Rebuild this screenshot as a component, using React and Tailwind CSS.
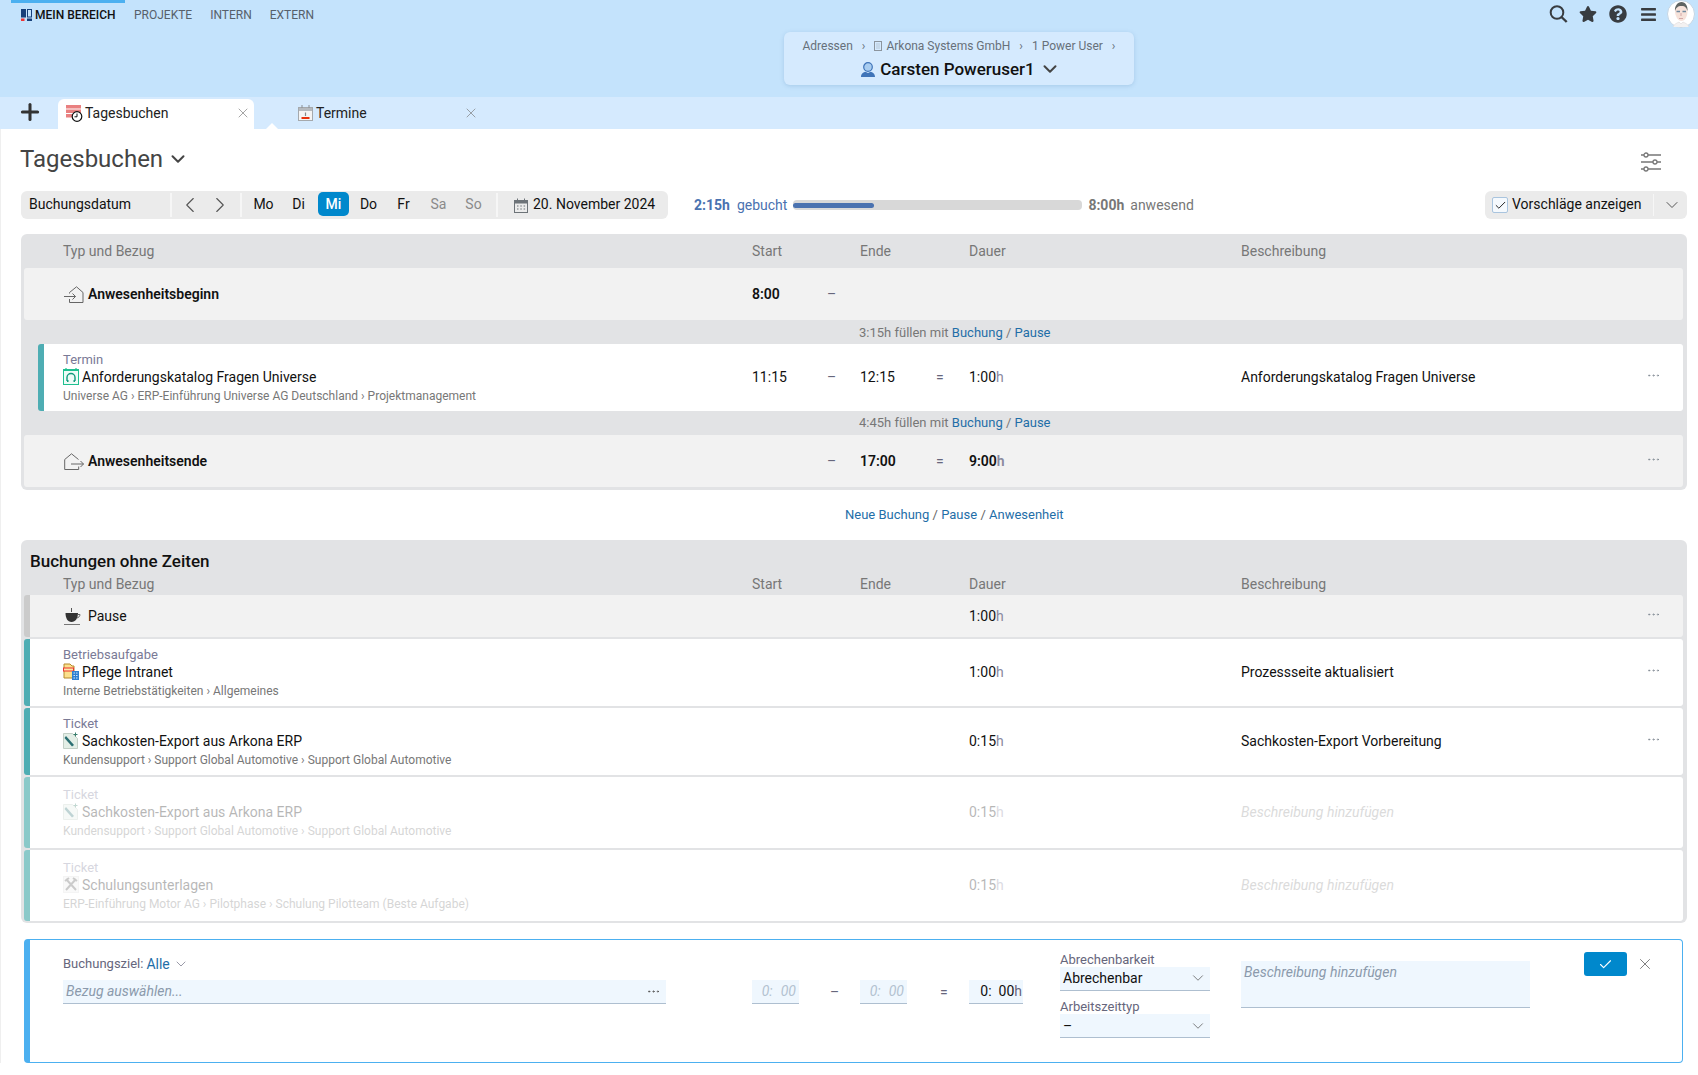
import { Plus, X, ChevronDown, ChevronLeft, ChevronRight, Ellipsis, Check } from "lucide-react";
import { FaStar, FaQuestionCircle, FaBars } from "react-icons/fa";

const cols = "grid grid-cols-[689px_75px_33px_76px_33px_272px_405px_1fr] items-center";

function Logo() {
	return (
		<svg width="11" height="12" viewBox="0 0 11 12">
			<rect x="0" y="0" width="5" height="8.5" fill="#17407a" />
			<rect x="0" y="9.5" width="3.5" height="2.5" fill="#e33" />
			<rect x="6.5" y="0.5" width="4" height="7.5" fill="none" stroke="#17407a" />
			<rect x="6" y="9.5" width="5" height="2.5" fill="#17407a" />
		</svg>
	);
}

function SearchIcon() {
	return (
		<svg width="19" height="18" viewBox="0 0 19 18" fill="none" stroke="#383c40" strokeWidth="2">
			<circle cx="8" cy="7.5" r="6.3" />
			<path d="M12.5 12l5.2 5" strokeWidth="2.4" />
		</svg>
	);
}

function Avatar() {
	return (
		<svg width="28" height="28" viewBox="0 0 28 28">
			<circle cx="14" cy="14" r="13.5" fill="#fff" stroke="#c5d6e4" />
			<path d="M8 11c0-5 3-8 6.500-8s6 3 6 8c.2 5-2.500 10-6 10s-6.500-5-6.500-10z" fill="#f6e2da" />
			<path d="M8 11c-.5-5 2.500-9 6.500-9s6.500 4 6 9c-1-3-2-5-6-5s-5.500 2-6.500 5z" fill="#5f6462" />
			<path d="M9.500 11.500h3.500M15.500 11.500h3.500" stroke="#6f8aa0" strokeWidth="1.300" />
			<path d="M14 13v3M12 18.500h4" stroke="#c99" strokeWidth=".8" />
			<path d="M6 27c1-3 4-4 6-5l2 2 2-2c2 1 5 2 6 5" fill="#f3f1f1" stroke="#d9d3d3" strokeWidth=".5" />
		</svg>
	);
}

function PersonIcon() {
	return (
		<svg width="14" height="15" viewBox="0 0 14 15">
			<circle cx="7" cy="5" r="4.300" fill="#a9cdf0" stroke="#3f74b8" strokeWidth="1.200" />
			<path d="M0 15c0-3.500 2.500-5 4.500-5.300L7 11l2.500-1.300C11.500 10 14 11.500 14 15z" fill="#3f74b8" />
		</svg>
	);
}

function BuildingIcon() {
	return (
		<svg width="8" height="10" viewBox="0 0 8 10" fill="none" stroke="#8c959e">
			<rect x=".5" y=".5" width="7" height="9" />
			<path d="M2.500 3h1M4.500 3h1M2.500 5h1M4.500 5h1M2.500 7h1M4.500 7h1" strokeWidth=".8" />
		</svg>
	);
}

function TagesbuchenIcon() {
	return (
		<svg width="17" height="17" viewBox="0 0 17 17">
			<rect x="0" y="0" width="15" height="3.500" fill="#e98080" />
			<rect x="0" y="4.500" width="15" height="3.500" fill="#e98080" />
			<rect x="0" y="9" width="15" height="3.500" fill="#e98080" />
			<circle cx="11" cy="11.500" r="4.800" fill="#fff" stroke="#111" strokeWidth="1.200" />
			<path d="M11 8.500v3.300H8.500" fill="none" stroke="#111" />
		</svg>
	);
}

function TermineIcon() {
	return (
		<svg width="15" height="16" viewBox="0 0 15 16">
			<rect x=".5" y="2.500" width="14" height="13" fill="#f4f4f4" stroke="#a5a9ad" />
			<rect x="1" y="3" width="13" height="3" fill="#b5babf" />
			<path d="M4 0v3M11 0v3" stroke="#8a8f94" />
			<path d="M7.500 7.500v3.500" stroke="#888" strokeWidth="1.200" />
			<rect x="3.500" y="12" width="8" height="2" fill="#e8320c" />
		</svg>
	);
}

function CalendarIcon() {
	return (
		<svg width="14" height="15" viewBox="0 0 14 15" fill="none" stroke="#6d7378">
			<rect x=".5" y="2.500" width="13" height="12" />
			<rect x="1" y="3" width="12" height="2.500" fill="#6d7378" stroke="none" />
			<path d="M3.500 0.500v2M10.500 0.500v2" />
			<path d="M3 8h1.500M6.300 8h1.500M9.600 8h1.500M3 11h1.500M6.300 11h1.500M9.600 11h1.500" strokeWidth="1.200" />
		</svg>
	);
}

function SlidersIcon() {
	return (
		<svg width="20" height="20" viewBox="0 0 20 20" fill="none" stroke="#777" strokeWidth="1.300">
			<path d="M0 3h3M7 3h13M0 10h12M16 10h4M0 17h3M7 17h13" />
			<circle cx="5" cy="3" r="2" />
			<circle cx="14" cy="10" r="2" />
			<circle cx="5" cy="17" r="2" />
		</svg>
	);
}

function HouseIn() {
	return (
		<svg width="20" height="17" viewBox="0 0 20 17" fill="none" stroke="#666">
			<path d="M5.500 7.500v-1L12.500.8l6.500 5.700V16.500H5.500V13" />
			<path d="M0 10.500h11.500M8.500 7.500l3 3-3 3" />
		</svg>
	);
}

function HouseOut() {
	return (
		<svg width="20" height="17" viewBox="0 0 20 17" fill="none" stroke="#666">
			<path d="M.7 6.500L7.500.8l7 5.700M.7 6.500v10h14V13.500" />
			<path d="M7 11h12.500M16.500 8l3 3-3 3" />
		</svg>
	);
}

function TerminTypeIcon() {
	return (
		<svg width="16" height="17" viewBox="0 0 16 17" fill="none">
			<rect x=".5" y="1.500" width="15" height="15" fill="#effcf7" stroke="#1fc090" />
			<path d="M3 0v2M13 0v2M0.500 2.500h15" stroke="#1fc090" strokeWidth="1.200" />
			<path d="M4 13V9.500a4 4 0 0 1 8 0V13" stroke="#129a7c" strokeWidth="1.400" />
			<path d="M4 13h1.500M10.500 13H12" stroke="#129a7c" strokeWidth="2" />
		</svg>
	);
}

function CoffeeIcon() {
	return (
		<svg width="17" height="17" viewBox="0 0 17 17" fill="none">
			<path d="M7.500 0v4" stroke="#555" />
			<path d="M1.500 5h12.500c0 5-2.500 9-6.500 9s-6-4-6-9z" fill="#333" />
			<path d="M13.500 6.500h2.500c0 2-1.500 3-3 3.500" stroke="#666" />
			<path d="M0 16.500h16" stroke="#777" />
		</svg>
	);
}

function FolderIcon() {
	return (
		<svg width="16" height="17" viewBox="0 0 16 17">
			<path d="M1 1h6l2 2h2v12H1z" fill="#fbe08c" stroke="#b5892c" />
			<rect x=".5" y="5" width="10" height="3" fill="#fbe9a8" stroke="#e33" />
			<rect x="9" y="8" width="7" height="9" fill="#2f7fd0" />
			<path d="M10.500 10h1.500M13 10h1.500M10.500 12.500h1.500M13 12.500h1.500M10.500 15h1.500M13 15h1.500" stroke="#cfe6fa" />
		</svg>
	);
}

function PenIcon() {
	return (
		<svg width="16" height="17" viewBox="0 0 16 17" fill="none">
			<path d="M.5 1.500h9l5 5v10H.5z" fill="#e3eee6" stroke="#c2cfc6" />
			<path d="M3 4l8 9-2 1.500-7.500-8.500z" fill="#2b6f73" />
			<path d="M12.500 0.500v4M10.500 2.500h4" stroke="#3a7f6e" />
		</svg>
	);
}

function ToolsIcon() {
	return (
		<svg width="16" height="17" viewBox="0 0 16 17" fill="none">
			<rect x=".5" y=".5" width="15" height="16" fill="#eee" stroke="#ddd" />
			<path d="M3 3l10 11M13 3L3 14M2 5l4-3M10 2l4 3" stroke="#555" strokeWidth="2" />
		</svg>
	);
}

function Dots({ up }) {
	return <Ellipsis size={15} strokeWidth={1.2} className={up ? "-mt-[4px] text-[#7d8790]" : "-mt-[2px] text-[#7d8790]"} />;
}

function Hours({ value, bold }) {
	return (
		<span className={bold ? "font-semibold" : ""}>
			{value}
			<span className="text-[#8a8a9e]">h</span>
		</span>
	);
}

function Cells({ title, start, end, dur, boldDur, desc, dots, dotsUp, italic }) {
	return (
		<>
			<div>{title}</div>
			<div>{start}</div>
			<div className="text-[#66667c]">{end ? "–" : start ? "–" : ""}</div>
			<div>{end}</div>
			<div className="text-[#66667c]">{dur && (start || end) ? "=" : ""}</div>
			<div>{dur && <Hours value={dur} bold={boldDur} />}</div>
			<div className={italic ? "italic text-[#8a8a8a]" : ""}>{desc}</div>
			<div>{dots && <Dots up={dotsUp} />}</div>
		</>
	);
}

function TaskTitle({ label, icon, name, path }) {
	return (
		<div className="flex flex-col pt-[2px]">
			<span className="text-[13px] leading-[16px] text-[#7a7a96]">{label}</span>
			<span className="flex items-center gap-[3px] leading-[18px] text-[#111]">
				{icon}
				{name}
			</span>
			<span className="mt-[2px] text-xs leading-[16px] text-[#777]">{path}</span>
		</div>
	);
}

function IconTitle({ icon, name, bold }) {
	return (
		<div className="flex items-center">
			<span className="flex w-[25px] pl-[1px]">{icon}</span>
			<span className={bold ? "font-semibold text-[#111]" : "text-[#111]"}>{name}</span>
		</div>
	);
}

function HeaderCells() {
	return (
		<div className={cols + " pl-[42px] text-[#777]"}>
			<div>Typ und Bezug</div>
			<div className="col-span-2">Start</div>
			<div className="col-span-2">Ende</div>
			<div>Dauer</div>
			<div>Beschreibung</div>
		</div>
	);
}

function Link({ children }) {
	return <span className="text-[#1f6ea8]">{children}</span>;
}

function FillRow({ text, first }) {
	return (
		<div className={first ? "flex h-[24px] items-center pl-[824px] pt-[2px] text-[13px] text-[#777]" : "flex h-[24px] items-center pl-[824px] text-[13px] text-[#777]"}>
			{text} füllen mit&nbsp;<Link>Buchung</Link>&nbsp;/&nbsp;<Link>Pause</Link>
		</div>
	);
}

function TimeField({ children }) {
	return <div className="mt-[40px] flex h-[24px] w-[47px] items-center justify-end border-b border-[#aebfd0] bg-[#eff7fe] pb-[1px] pr-[3px] italic text-[#b3c2d0]">{children}</div>;
}

const tasks = [
	{
		label: "Betriebsaufgabe",
		icon: <FolderIcon />,
		name: "Pflege Intranet",
		path: "Interne Betriebstätigkeiten › Allgemeines",
		dur: "1:00",
		desc: "Prozessseite aktualisiert",
	},
	{
		label: "Ticket",
		icon: <PenIcon />,
		name: "Sachkosten-Export aus Arkona ERP",
		path: "Kundensupport › Support Global Automotive › Support Global Automotive",
		dur: "0:15",
		desc: "Sachkosten-Export Vorbereitung",
	},
];

const suggestions = [
	{
		label: "Ticket",
		icon: <PenIcon />,
		name: "Sachkosten-Export aus Arkona ERP",
		path: "Kundensupport › Support Global Automotive › Support Global Automotive",
	},
	{
		label: "Ticket",
		icon: <ToolsIcon />,
		name: "Schulungsunterlagen",
		path: "ERP-Einführung Motor AG › Pilotphase › Schulung Pilotteam (Beste Aufgabe)",
	},
];

const days = ["Mo", "Di", "Mi", "Do", "Fr", "Sa", "So"];

export default function App() {
	return (
		<div className="min-h-[1075px] bg-white font-[Roboto,sans-serif] text-sm text-[#111]">
			{/* top */}
			<div className="h-[97px] bg-[#c4e3fc]">
				<div className="flex h-[28px] items-start justify-between">
					<div className="flex text-xs leading-[24px] text-[#56606b]">
						<div className="ml-[11px] flex w-[114px] items-center gap-[3px] border-t-[3px] border-[#4cb0f0] pl-[10px] font-medium text-[#111]">
							<Logo />
							MEIN BEREICH
						</div>
						<div className="flex gap-[18px] border-t-[3px] border-transparent pl-[9px]">
							<span>PROJEKTE</span>
							<span>INTERN</span>
							<span>EXTERN</span>
						</div>
					</div>
					<div className="flex items-center pr-[3px] text-[#383c40]">
						<SearchIcon />
						<FaStar size={18} className="ml-[11px]" />
						<FaQuestionCircle size={18} className="ml-[12px]" />
						<FaBars size={17} className="ml-[13px]" />
						<span className="ml-[10px]">
							<Avatar />
						</span>
					</div>
				</div>
				<div className="ml-[784px] mt-[4px] h-[53px] w-[350px] rounded-[6px] bg-[#d5eafe] pt-[6px] shadow-[0_1px_4px_rgba(80,130,180,0.25)]">
					<div className="flex items-center justify-center gap-[9px] text-xs leading-[16px] text-[#67707a]">
						<span>Adressen</span>
						<span>›</span>
						<span className="flex items-center gap-[4px]">
							<BuildingIcon />
							Arkona Systems GmbH
						</span>
						<span>›</span>
						<span>1 Power User</span>
						<span>›</span>
					</div>
					<div className="mt-[3px] flex items-center justify-center gap-[5px] pl-[4px] text-[17px] font-medium leading-[24px] text-[#111]">
						<PersonIcon />
						Carsten Poweruser1
						<ChevronDown size={22} strokeWidth={2.2} className="-ml-[1px] text-[#444]" />
					</div>
				</div>
			</div>

			{/* tabs */}
			<div className="flex h-[32px] items-end bg-[#d5eafe]">
				<Plus size={26} strokeWidth={2.8} className="mb-[4px] ml-[17px] text-[#333]" />
				<div className="ml-[15px] flex h-[30px] w-[196px] items-center rounded-t-[6px] bg-white pb-[2px] pl-[8px]">
					<TagesbuchenIcon />
					<span className="ml-[2px] text-[#222]">Tagesbuchen</span>
					<X size={16} strokeWidth={1} className="ml-[67px] text-[#777]" />
				</div>
				<div className="relative flex h-[30px] w-[240px] items-center pb-[2px] pl-[44px]">
					<svg width="12" height="6" viewBox="0 0 12 6" className="absolute bottom-0 left-[12px]">
						<path d="M0 6L6 0l6 6z" fill="#fff" />
					</svg>
					<TermineIcon />
					<span className="ml-[3px] text-[#222]">Termine</span>
					<X size={16} strokeWidth={1} className="ml-[96px] text-[#777]" />
				</div>
			</div>

			{/* content */}
			<div className="border-l border-[#efefef] pl-[20px] pr-[11px]">
				<div className="flex items-start justify-between pt-[14px]">
					<div className="-ml-[1px] flex items-center gap-[4px] text-2xl leading-[32px] text-[#444]">
						Tagesbuchen
						<ChevronDown size={22} strokeWidth={2.2} />
					</div>
					<div className="mr-[26px] mt-[9px]">
						<SlidersIcon />
					</div>
				</div>

				<div className="mt-[16px] flex h-[28px] items-center">
					<div className="flex h-full w-[647px] items-center rounded-[6px] bg-[#ebebeb]">
						<span className="w-[149px] pb-[2px] pl-[8px]">Buchungsdatum</span>
						<div className="h-[24px] w-[2px] bg-[#f6f6f6]" />
						<div className="ml-[3px] flex w-[30px] justify-center">
							<ChevronLeft size={26} strokeWidth={1} className="text-[#555]" />
						</div>
						<div className="flex w-[30px] justify-center">
							<ChevronRight size={26} strokeWidth={1} className="text-[#555]" />
						</div>
						<div className="ml-[5px] h-[24px] w-[2px] bg-[#f6f6f6]" />
						<div className="ml-[4px] flex">
							{days.map((d) => (
								<div key={d} className="flex w-[35px] justify-center">
									{d === "Mi" ? (
										<span className="flex h-[24px] w-[31px] items-center justify-center rounded-[5px] bg-[#0088cc] font-medium text-white">{d}</span>
									) : (
										<span className={d === "Sa" || d === "So" ? "pb-[2px] leading-[24px] text-[#8a8a8a]" : "pb-[2px] leading-[24px]"}>{d}</span>
									)}
								</div>
							))}
						</div>
						<div className="ml-[5px] h-[24px] w-[2px] bg-[#f6f6f6]" />
						<span className="ml-[16px]">
							<CalendarIcon />
						</span>
						<span className="ml-[5px] pb-[2px]">20. November 2024</span>
					</div>

					<span className="ml-[26px] font-bold text-[#4a72b0]">2:15h</span>
					<span className="ml-[7px] text-[#4a72b0]">gebucht</span>
					<div className="ml-[6px] flex h-[10px] w-[289px] items-center rounded-[4px] bg-[#d8d8d8]">
						<div className="h-[5px] w-[28%] rounded-[3px] bg-[#4a72b0]" />
					</div>
					<span className="ml-[6px] font-bold text-[#777]">8:00h</span>
					<span className="ml-[6px] text-[#777]">anwesend</span>

					<div className="ml-auto flex h-full w-[202px] items-center rounded-[6px] bg-[#ebebeb] pl-[7px]">
						<span className="flex h-[16px] w-[16px] items-center justify-center rounded-[2px] border border-[#a9c4de] bg-[#f5f9fd]">
							<Check size={13} strokeWidth={1.8} className="text-[#222]" />
						</span>
						<span className="ml-[4px] pb-[2px]">Vorschläge anzeigen</span>
						<div className="ml-[12px] h-[22px] w-[1px] bg-[#f6f6f6]" />
						<ChevronDown size={20} strokeWidth={1.2} className="ml-[8px] text-[#555]" />
					</div>
				</div>

				{/* timed bookings */}
				<div className="mt-[15px] rounded-[6px] bg-[#e2e3e5] pb-[3px] pl-[3px]">
					<div className="-ml-[3px] flex h-[34px] items-center">
						<HeaderCells />
					</div>
					<div className="mr-[4px] rounded-[3px] bg-[#f2f2f2] pl-[39px]">
						<div className={cols + " h-[52px]"}>
							<Cells
								title={<IconTitle icon={<HouseIn />} name="Anwesenheitsbeginn" bold />}
								start={<span className="font-semibold">8:00</span>}
							/>
						</div>
					</div>
					<div className="ml-[11px]">
						<FillRow text="3:15h" first />
						<div className="ml-[3px] mr-[4px] rounded-[3px] border-l-[6px] border-[#4eadb3] bg-white pl-[19px]">
							<div className={cols + " h-[67px] pb-[2px]"}>
								<Cells
									title={
										<TaskTitle
											label="Termin"
											icon={<TerminTypeIcon />}
											name="Anforderungskatalog Fragen Universe"
											path="Universe AG › ERP-Einführung Universe AG Deutschland › Projektmanagement"
										/>
									}
									start="11:15"
									end="12:15"
									dur="1:00"
									desc="Anforderungskatalog Fragen Universe"
									dots
								/>
							</div>
						</div>
						<FillRow text="4:45h" />
					</div>
					<div className="mr-[4px] rounded-[3px] bg-[#f2f2f2] pl-[39px]">
						<div className={cols + " h-[52px]"}>
							<Cells
								title={<IconTitle icon={<HouseOut />} name="Anwesenheitsende" bold />}
								end={<span className="font-semibold">17:00</span>}
								dur="9:00"
								boldDur
								dots
								dotsUp
							/>
						</div>
					</div>
				</div>

				<div className="mt-[16px] flex h-[18px] items-center pl-[824px] text-[13px] text-[#666]">
					<Link>Neue Buchung</Link>&nbsp;/&nbsp;<Link>Pause</Link>&nbsp;/&nbsp;<Link>Anwesenheit</Link>
				</div>

				{/* bookings without times */}
				<div className="mt-[16px] rounded-[6px] bg-[#e2e3e5] pb-[2px] pl-[3px]">
					<div className="-ml-[3px]">
						<div className="pl-[9px] pt-[12px] text-[17px] font-medium leading-[18px] text-[#111]">Buchungen ohne Zeiten</div>
						<div className="mt-[4px] flex h-[21px] items-start leading-[20px]">
							<HeaderCells />
						</div>
					</div>
					<div className="flex flex-col gap-[2px]">
						<div className="mr-[4px] rounded-[3px] border-l-[6px] border-[#cbcbcb] bg-[#f2f2f2] pl-[33px]">
							<div className={cols + " h-[42px]"}>
								<Cells title={<IconTitle icon={<CoffeeIcon />} name="Pause" />} dur="1:00" dots dotsUp />
							</div>
						</div>
						{tasks.map((t) => (
							<div key={t.name} className="mr-[4px] rounded-[3px] border-l-[6px] border-[#4eadb3] bg-white pl-[33px]">
								<div className={cols + " h-[67px] pb-[2px]"}>
									<Cells title={<TaskTitle {...t} />} dur={t.dur} desc={t.desc} dots />
								</div>
							</div>
						))}
						{suggestions.map((t) => (
							<div key={t.name} className="mr-[4px] rounded-[3px] border-l-[6px] border-[#8ac9c9] bg-white pl-[33px]">
								<div className={cols + " h-[71px] pb-[2px] opacity-30"}>
									<Cells title={<TaskTitle {...t} />} dur="0:15" desc="Beschreibung hinzufügen" italic />
								</div>
							</div>
						))}
					</div>
				</div>

				{/* new booking form */}
				<div className="ml-[3px] mr-[4px] mt-[16px] flex h-[124px] items-start rounded-[4px] border border-l-[6px] border-[#4cb0f0] pl-[33px]">
					<div className="w-[603px]">
						<div className="mt-[15px] flex h-[18px] items-center text-[13px] leading-[18px] text-[#66667c]">
							Buchungsziel:
							<span className="ml-[3px] text-sm leading-[18px] text-[#1f6ea8]">Alle</span>
							<ChevronDown size={16} strokeWidth={1} className="ml-[3px]" />
						</div>
						<div className="mt-[7px] flex h-[24px] items-center justify-between border-b border-[#aebfd0] bg-[#eff7fe] pb-[1px] pl-[3px] pr-[5px] italic text-[#8b9aac]">
							Bezug auswählen...
							<Ellipsis size={15} strokeWidth={1.4} className="text-[#555]" />
						</div>
					</div>
					<div className="ml-[86px] flex">
						<TimeField>
							0:<span className="ml-[8px]">00</span>
						</TimeField>
					</div>
					<div className="mt-[40px] w-[61px] pl-[31px] leading-[24px] text-[#66667c]">–</div>
					<TimeField>
						0:<span className="ml-[8px]">00</span>
					</TimeField>
					<div className="mt-[40px] w-[62px] pl-[33px] leading-[24px] text-[#66667c]">=</div>
					<div className="mt-[40px] flex h-[24px] w-[54px] items-center justify-end border-b border-[#aebfd0] bg-[#eff7fe] pb-[1px] pr-[1px]">
						0:<span className="ml-[7px]">00</span>
						<span className="text-[#66667c]">h</span>
					</div>
					<div className="ml-[37px] w-[150px]">
						<div className="mt-[13px] text-[13px] leading-[14px] text-[#66667c]">Abrechenbarkeit</div>
						<div className="flex h-[24px] items-center justify-between border-b border-[#aebfd0] bg-[#eff7fe] pb-[1px] pl-[3px] pr-[3px]">
							Abrechenbar
							<ChevronDown size={18} strokeWidth={1} className="text-[#555]" />
						</div>
						<div className="mt-[9px] text-[13px] leading-[14px] text-[#66667c]">Arbeitszeittyp</div>
						<div className="flex h-[24px] items-center justify-between border-b border-[#aebfd0] bg-[#eff7fe] pl-[3px] pr-[3px]">
							–
							<ChevronDown size={18} strokeWidth={1} className="text-[#555]" />
						</div>
					</div>
					<div className="ml-[31px] mt-[21px] h-[47px] w-[289px] border-b border-[#aebfd0] bg-[#eff7fe] pl-[3px] pt-[1px] italic text-[#8b9aac]">
						Beschreibung hinzufügen
					</div>
					<div className="ml-[54px] mt-[12px] flex h-[24px] w-[43px] items-center justify-center rounded-[3px] bg-[#0088cc]">
						<Check size={15} strokeWidth={1.8} className="text-white" />
					</div>
					<X size={18} strokeWidth={1} className="ml-[9px] mt-[15px] text-[#555]" />
				</div>
			</div>
		</div>
	);
}
